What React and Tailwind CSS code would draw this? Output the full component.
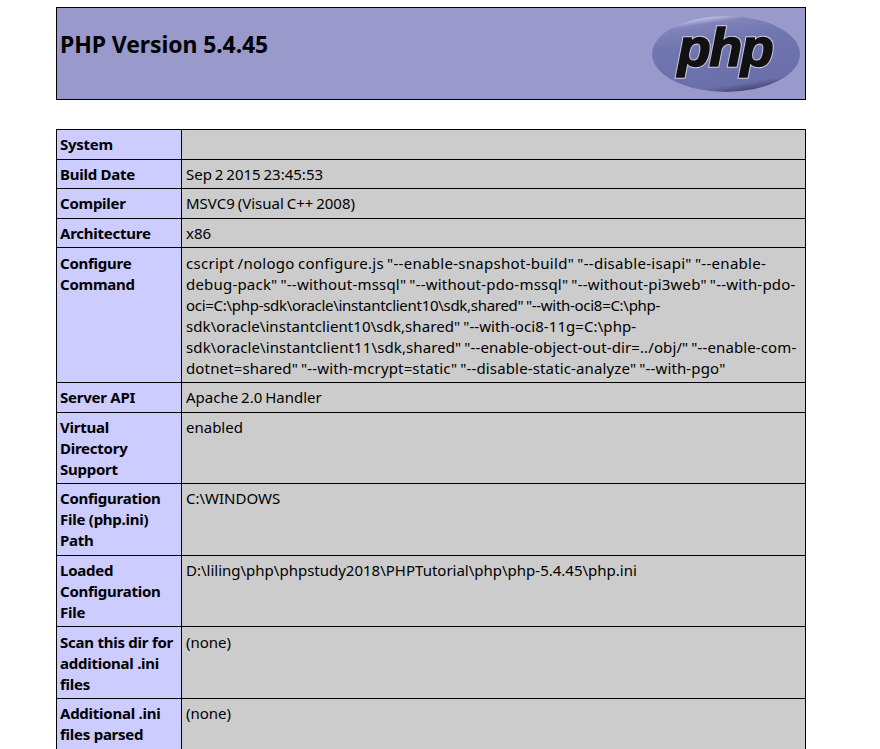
const configureLines = [
  { text: `cscript /nologo configure.js "--enable-snapshot-build" "--disable-isapi" "--enable-`, cls: "tracking-[0.29px]" },
  { text: `debug-pack" "--without-mssql" "--without-pdo-mssql" "--without-pi3web" "--with-pdo-`, cls: "tracking-[0.2px]" },
  { text: `oci=C:\\php-sdk\\oracle\\instantclient10\\sdk,shared" "--with-oci8=C:\\php-`, cls: "tracking-[-0.29px]" },
  { text: `sdk\\oracle\\instantclient10\\sdk,shared" "--with-oci8-11g=C:\\php-`, cls: "tracking-[0.08px]" },
  { text: `sdk\\oracle\\instantclient11\\sdk,shared" "--enable-object-out-dir=../obj/" "--enable-com-`, cls: "tracking-[0.11px]" },
  { text: `dotnet=shared" "--with-mcrypt=static" "--disable-static-analyze" "--with-pgo"`, cls: "tracking-[0.14px]" },
];

const rows = [
  ["System", ""],
  ["Build Date", "Sep 2 2015 23:45:53"],
  ["Compiler", "MSVC9 (Visual C++ 2008)"],
  ["Architecture", "x86"],
  ["Configure Command", null],
  ["Server API", "Apache 2.0 Handler"],
  ["Virtual Directory Support", "enabled"],
  ["Configuration File (php.ini) Path", "C:\\WINDOWS"],
  ["Loaded Configuration File", "D:\\liling\\php\\phpstudy2018\\PHPTutorial\\php\\php-5.4.45\\php.ini"],
  ["Scan this dir for additional .ini files", "(none)"],
  ["Additional .ini files parsed", "(none)"],
];

function PhpLogo() {
  return (
    <svg width="150" height="80" viewBox="0 0 150 80" className="shrink-0">
      <defs>
        <linearGradient id="oval" x1="0.35" y1="0" x2="0.65" y2="1">
          <stop offset="0" stopColor="#d2d3ea" />
          <stop offset="0.1" stopColor="#8084ba" />
          <stop offset="0.3" stopColor="#7377b0" />
          <stop offset="0.88" stopColor="#6a6ea9" />
          <stop offset="1" stopColor="#3f4166" />
        </linearGradient>
      </defs>
      <ellipse cx="75" cy="38" rx="74" ry="38" fill="url(#oval)" />
      <text
        x="74"
        y="50"
        textAnchor="middle"
        fontFamily="'Liberation Sans', sans-serif"
        fontSize="54"
        fontWeight="700"
        fontStyle="italic"
        letterSpacing="-1.5"
        fill="none"
        stroke="#c9cbe6"
        strokeWidth="3.5"
      >
        php
      </text>
      <text
        x="74"
        y="50"
        textAnchor="middle"
        fontFamily="'Liberation Sans', sans-serif"
        fontSize="54"
        fontWeight="700"
        fontStyle="italic"
        letterSpacing="-1.5"
        fill="#111111"
        stroke="#111111"
        strokeWidth="1.6"
      >
        php
      </text>
    </svg>
  );
}

export default function App() {
  return (
    <div className="min-h-screen bg-white text-black font-['Noto_Sans',sans-serif] text-[15px] leading-[21px] pt-[7px]">
      <div className="w-[750px] ml-[56px] h-[93px] bg-[#9999cc] border border-black flex justify-between pl-[3px] pr-[4px] pt-[8px]">
        <h1 className="text-[23px] leading-[57px] font-bold tracking-[-0.1px]">PHP Version 5.4.45</h1>
        <PhpLogo />
      </div>
      <table className="w-[750px] ml-[56px] mt-[29px] border-collapse table-fixed">
        <tbody>
          {rows.map(([label, value]) => (
            <tr key={label}>
              <td className="w-[125px] bg-[#ccccff] border border-black pl-[3px] pr-[4px] pt-[4.3px] pb-[3.3px] align-top font-bold tracking-[-0.25px]">
                {label}
              </td>
              <td className="bg-[#cccccc] border border-black px-[4px] pt-[4.3px] pb-[3.3px] align-top [word-spacing:-1px]">
                {value === null
                  ? configureLines.map((l) => (
                      <div key={l.text} className={"whitespace-nowrap " + l.cls}>
                        {l.text}
                      </div>
                    ))
                  : value}
              </td>
            </tr>
          ))}
        </tbody>
      </table>
    </div>
  );
}
